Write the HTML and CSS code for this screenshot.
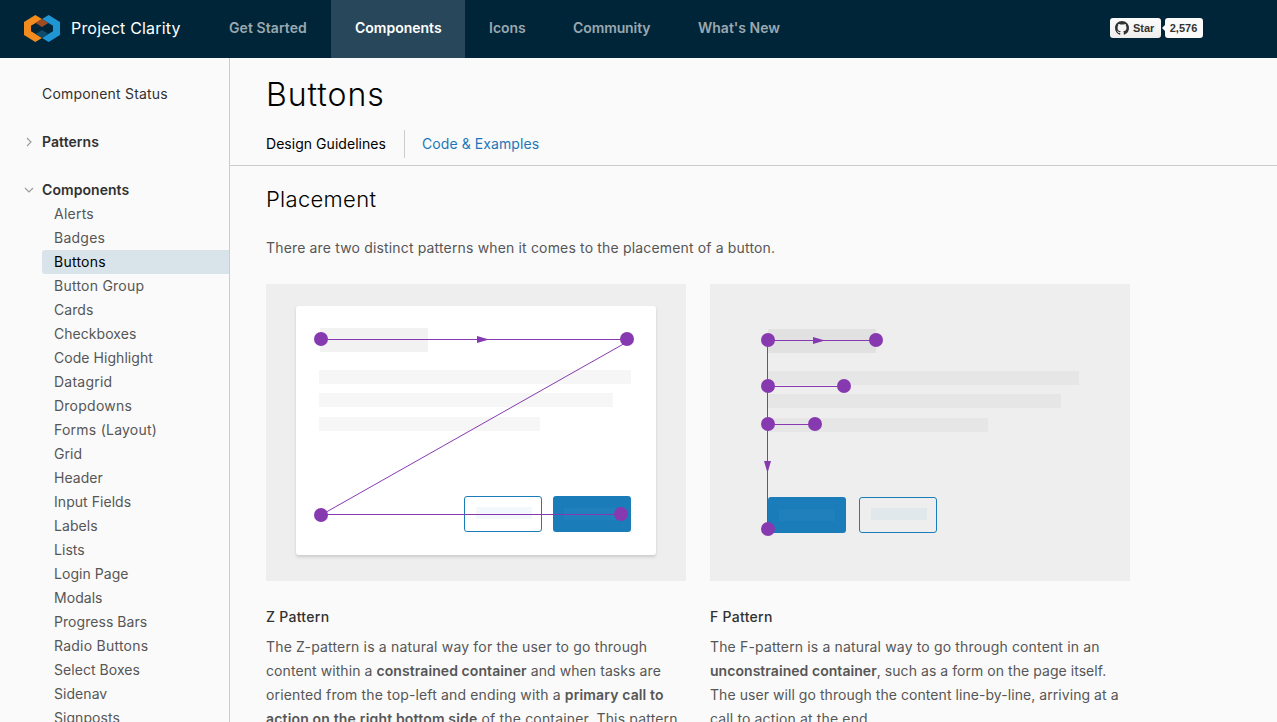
FILE: index.html
```html
<!DOCTYPE html>
<html lang="en">
<head>
<meta charset="utf-8">
<title>Buttons - Project Clarity</title>
<link rel="stylesheet" href="styles.css">
</head>
<body>
<header class="header">
  <a class="brand">
    <svg class="logo" width="36" height="27" viewBox="72 44 108 81">
      <path fill="#f38b1e" d="M106 44l20 12-19 12-14 8v17l14 8 19 12-20 12-34-21V65z"/>
      <path fill="#2095d3" d="M146 44l-20 12 19 12 14 8v17l-14 8-19 12 20 12 34-21V65z"/>
      <path fill="#a04b24" d="M126 56l19 12-19 12-19-12z"/>
      <path fill="#104c6c" d="M126 89l19 12-19 12-19-12z"/>
    </svg>
    <span class="brand-name">Project Clarity</span>
  </a>
  <nav class="nav">
    <a class="nav-link started">Get Started</a>
    <a class="nav-link components active">Components</a>
    <a class="nav-link icons">Icons</a>
    <a class="nav-link community">Community</a>
    <a class="nav-link news">What's New</a>
  </nav>
  <div class="github">
    <a class="star">
      <svg width="14" height="14" viewBox="0 0 16 16"><path fill="#333" d="M8 0C3.58 0 0 3.58 0 8c0 3.54 2.29 6.53 5.47 7.59.4.07.55-.17.55-.38 0-.19-.01-.82-.01-1.49-2.01.37-2.53-.49-2.69-.94-.09-.23-.48-.94-.82-1.13-.28-.15-.68-.52-.01-.53.63-.01 1.08.58 1.23.82.72 1.21 1.87.87 2.33.66.07-.52.28-.87.51-1.07-1.78-.2-3.64-.89-3.64-3.95 0-.87.31-1.59.82-2.15-.08-.2-.36-1.02.08-2.12 0 0 .67-.21 2.2.82.64-.18 1.32-.27 2-.27s1.36.09 2 .27c1.53-1.04 2.2-.82 2.2-.82.44 1.1.16 1.92.08 2.12.51.56.82 1.27.82 2.15 0 3.07-1.87 3.75-3.65 3.95.29.25.54.73.54 1.48 0 1.07-.01 1.93-.01 2.2 0 .21.15.46.55.38A8.01 8.01 0 0 0 16 8c0-4.42-3.58-8-8-8z"/></svg>
      <span>Star</span>
    </a>
    <a class="count">2,576</a>
  </div>
</header>
<div class="layout">
  <aside class="sidebar">
    <a class="side-top">Component Status</a>
    <div class="group">
      <svg class="caret" width="12" height="12" viewBox="0 0 12 12"><path d="M4 2l4 4-4 4"/></svg>
      <span>Patterns</span>
    </div>
    <div class="group">
      <svg class="caret" width="12" height="12" viewBox="0 0 12 12"><path d="M2 4l4 4 4-4"/></svg>
      <span>Components</span>
    </div>
    <ul class="links">
      <li class="wide">Alerts</li>
      <li class="wide">Badges</li>
      <li class="wide current">Buttons</li>
      <li class="wide">Button Group</li>
      <li>Cards</li>
      <li>Checkboxes</li>
      <li>Code Highlight</li>
      <li class="wide">Datagrid</li>
      <li class="wide">Dropdowns</li>
      <li class="wide">Forms (Layout)</li>
      <li>Grid</li>
      <li>Header</li>
      <li>Input Fields</li>
      <li>Labels</li>
      <li>Lists</li>
      <li>Login Page</li>
      <li>Modals</li>
      <li>Progress Bars</li>
      <li class="wide">Radio Buttons</li>
      <li>Select Boxes</li>
      <li>Sidenav</li>
      <li>Signposts</li>
    </ul>
  </aside>
  <main class="main">
    <div class="title-bar">
      <h1>Buttons</h1>
      <div class="tabs">
        <a class="tab selected">Design Guidelines</a>
        <a class="tab code">Code &amp; Examples</a>
      </div>
    </div>
    <section class="content">
      <h2>Placement</h2>
      <p class="intro">There are two distinct patterns when it comes to the placement of a button.</p>
      <div class="columns">
        <article class="pattern">
          <svg class="figure" width="420" height="297" viewBox="0 0 420 297">
            <rect class="canvas" width="420" height="297"/>
            <rect class="card" x="30" y="22" width="360" height="249" rx="3"/>
            <rect fill="#f2f2f2" x="54" y="44" width="108" height="24"/>
            <g fill="#f6f6f6">
              <rect x="53" y="86" width="312" height="14"/>
              <rect x="53" y="109" width="294" height="14"/>
              <rect x="53" y="133" width="221" height="14"/>
            </g>
            <rect class="outline" x="198.5" y="212.5" width="77" height="35" rx="2.5"/>
            <rect fill="#f2f8fc" x="210" y="223" width="56" height="12"/>
            <rect class="solid" x="287" y="212" width="78" height="36" rx="3"/>
            <rect class="solid-label" x="298" y="224" width="56" height="12"/>
            <path class="path" d="M55 55.5H361M55 230.5H355"/>
            <path class="path" d="M361 58L55 231"/>
            <g class="node">
              <path d="M211 52l12 3.5-12 3.5z"/>
              <circle cx="55" cy="55" r="7"/>
              <circle cx="361" cy="55" r="7"/>
              <circle cx="55" cy="231" r="7"/>
              <circle cx="355" cy="230" r="7"/>
            </g>
          </svg>
          <h3>Z Pattern</h3>
          <p class="z"><span class="l1">The Z-pattern is a natural way for the user to go through</span><br><span class="l2">content within a <b>constrained container</b> and when tasks are</span><br><span class="l3">oriented from the top-left and ending with a <b>primary call to</b></span><br><span class="l4"><b>action on the right bottom side</b> of the container. This pattern</span></p>
        </article>
        <article class="pattern">
          <svg class="figure" width="420" height="297" viewBox="0 0 420 297">
            <rect class="canvas" width="420" height="297"/>
            <rect fill="#e1e1e1" x="58" y="45" width="108" height="24"/>
            <g fill="#e6e6e6">
              <rect x="58" y="87" width="311" height="14"/>
              <rect x="58" y="110" width="293" height="14"/>
              <rect x="58" y="134" width="220" height="14"/>
            </g>
            <rect class="solid" x="58" y="213" width="78" height="36" rx="3"/>
            <rect class="solid-label" x="69" y="225" width="56" height="12"/>
            <rect class="outline" x="149.5" y="213.5" width="77" height="35" rx="2.5"/>
            <rect fill="#e0e8eb" x="161" y="224" width="56" height="12"/>
            <path class="path" d="M57.5 56V245M58 56.5H166M58 102.5H134M58 140.5H105"/>
            <g class="node">
              <path d="M103 53l12 3.5-12 3.5zM54 177l3.5 12 3.5-12z"/>
              <circle cx="58" cy="56" r="7"/>
              <circle cx="166" cy="56" r="7"/>
              <circle cx="58" cy="102" r="7"/>
              <circle cx="134" cy="102" r="7"/>
              <circle cx="58" cy="140" r="7"/>
              <circle cx="105" cy="140" r="7"/>
              <circle cx="58" cy="245" r="7"/>
            </g>
          </svg>
          <h3>F Pattern</h3>
          <p class="f"><span class="l1">The F-pattern is a natural way to go through content in an</span><br><span class="l2"><b>unconstrained container</b>, such as a form on the page itself.</span><br><span class="l3">The user will go through the content line-by-line, arriving at a</span><br><span class="l4">call to action at the end.</span></p>
        </article>
      </div>
    </section>
  </main>
</div>
</body>
</html>
```
FILE: styles.css
```css
* { box-sizing: border-box; }
html, body { height: 100%; }
body {
  margin: 0;
  overflow: hidden;
  display: flex;
  flex-direction: column;
  background: #fafafa;
  color: #565656;
  font: 400 14px/24px Inter, "Open Sans", sans-serif;
}
h1, h2, h3, p, ul { margin: 0; padding: 0; }
h1, h2, h3 { font-weight: 400; color: #000; }
b { font-weight: 600; }

/* Header */
.header { flex: none; height: 58px; display: flex; background: #002538; }
.brand { width: 205px; padding-left: 24px; display: flex; align-items: center; }
.logo { flex: none; margin-bottom: 2px; }
.brand-name { margin: 0 0 3px 11px; font-size: 16px; letter-spacing: .19px; color: #fff; white-space: nowrap; }
.nav { display: flex; }
.nav-link {
  padding: 16px 24px 0;
  color: #9aa8b0;
  font-weight: 600;
  white-space: nowrap;
}
.started { width: 126px; letter-spacing: .08px; }
.components { width: 134px; }
.icons { width: 84px; }
.community { width: 125px; letter-spacing: -.1px; }
.active { color: #fff; background: #29475a; }
.github {
  margin: 18px 74px 0 auto;
  height: 20px;
  display: flex;
  gap: 4px;
  font: bold 11px/20px "Liberation Sans", sans-serif;
  color: #333;
}
.star {
  width: 51px;
  display: flex;
  align-items: center;
  gap: 4px;
  padding-left: 5px;
  border-radius: 3px;
  background: linear-gradient(#fcfcfc, #eee);
}
.count { position: relative; width: 38px; padding-right: 1px; border-radius: 3px; background: #fafafa; text-align: center; }
.count::before {
  content: "";
  position: absolute;
  left: -3px;
  top: 7px;
  border: solid transparent;
  border-width: 3px 3px 3px 0;
  border-right-color: #fafafa;
}

/* Side navigation */
.layout { flex: 1; min-height: 0; display: flex; }
.sidebar { flex: none; width: 230px; border-right: 1px solid #ccc; padding-top: 24px; overflow: hidden; }
.side-top { display: block; padding-left: 42px; letter-spacing: .19px; color: #313131; }
.group { display: flex; align-items: center; gap: 7px; margin-top: 24px; padding-left: 23px; color: #313131; font-weight: 600; letter-spacing: .06px; }
.caret path { fill: none; stroke: #9a9a9a; stroke-width: 1.1; }
.links { list-style: none; margin-left: 42px; }
.links li { height: 24px; padding-left: 12px; letter-spacing: .05px; }
.links .wide { letter-spacing: .24px; }
.links .current { color: #000; background: #d9e4ea; border-radius: 3px 0 0 3px; }

/* Content */
.main { flex: 1; min-width: 0; overflow: hidden; }
.title-bar { height: 108px; border-bottom: 1px solid #ccc; padding: 13px 0 0 36px; }
h1 { font-size: 32px; line-height: 48px; font-weight: 300; letter-spacing: .95px; }
.tabs { display: flex; margin-top: 11px; line-height: 28px; }
.tab { white-space: nowrap; }
.selected { width: 139px; border-right: 1px solid #ccc; color: #000; letter-spacing: .04px; }
.code { padding-left: 17px; color: #1c77b9; letter-spacing: .08px; }
.content { padding: 21px 0 0 36px; }
h2 { font-size: 22px; line-height: 24px; font-weight: 300; letter-spacing: .3px; }
.intro { margin-top: 25px; letter-spacing: .16px; }
.columns { display: flex; gap: 24px; margin-top: 24px; }
.pattern { width: 420px; white-space: nowrap; }
.figure { display: block; }
h3 { margin: 24px 0 6px; font-size: 14px; line-height: 24px; font-weight: 500; letter-spacing: .28px; color: #313131; }

.z .l1 { letter-spacing: .17px; }
.z .l2 { letter-spacing: .08px; }
.z .l3 { letter-spacing: .14px; }
.z .l4 { letter-spacing: .17px; }
.f .l1 { letter-spacing: .15px; }
.f .l2 { letter-spacing: .05px; }
.f .l3 { letter-spacing: .06px; }
.f .l4 { letter-spacing: .14px; }

/* Diagrams */
.canvas { fill: #eee; }
.card { fill: #fff; filter: drop-shadow(0 2px 1.5px rgba(0, 0, 0, .14)); }
.solid { fill: #1b7cba; }
.solid-label { fill: #2080bc; }
.outline { fill: none; stroke: #1b7cba; }
.path { fill: none; stroke: #873ab0; }
.node { fill: #873ab0; }
```
